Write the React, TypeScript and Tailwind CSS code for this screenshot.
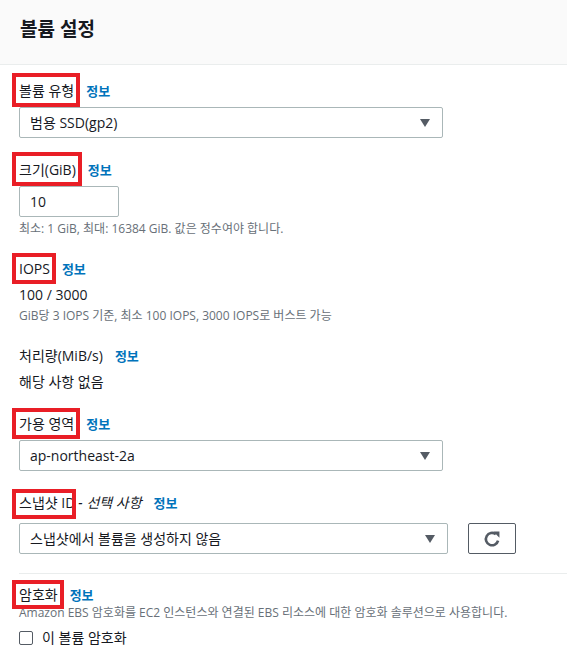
import React from "react";

const Info = () => (
  <a className="ml-[12px] text-[13px] font-semibold text-[#0073bb] cursor-pointer">정보</a>
);

type LabelProps = {
  text: string;
  mark?: boolean;
  box?: string;
  extra?: React.ReactNode;
};

const FieldLabel: React.FC<LabelProps> = ({ text, mark = true, box = "", extra }) => (
  <div className="flex items-center h-5 text-[14px] leading-5 text-[#16191f]">
    <span className="relative">
      {text}
      {mark && (
        <span className={`absolute border-4 border-[#e91e26] pointer-events-none ${box}`} />
      )}
    </span>
    {extra}
    <Info />
  </div>
);

const Caret = () => (
  <svg width="10" height="8" viewBox="0 0 10 8" className="shrink-0">
    <path d="M0 0h10L5 8z" fill="#545b64" />
  </svg>
);

const Select: React.FC<{ value: string; className?: string }> = ({ value, className = "" }) => (
  <div
    className={`flex items-center justify-between h-[31px] border border-[#aab7b8] rounded-[2px] pl-[10px] pr-[12px] text-[14px] text-[#16191f] bg-white ${className}`}
  >
    <span>{value}</span>
    <Caret />
  </div>
);

const RefreshIcon = () => (
  <svg width="18" height="18" viewBox="0 0 16 16" fill="none">
    <path
      d="M13.4 9.4A5.5 5.5 0 1 1 11.4 3.7"
      stroke="#545b64"
      strokeWidth="2.3"
    />
    <path d="M9.2 1.4h5.4v5.4z" fill="#545b64" />
  </svg>
);

export default function App() {
  return (
    <div
      className="w-[567px] h-[662px] bg-white overflow-hidden"
      style={{ fontFamily: '"Open Sans", "Noto Sans CJK KR", sans-serif' }}
    >
      <div className="h-[65px] bg-[#fafafa] border-b border-[#eaeded] flex items-center pl-[20px]">
        <h2 className="text-[19px] font-bold text-[#16191f] -mt-[5px]">볼륨 설정</h2>
      </div>

      <div className="pl-[19px] pt-[16px]">
        {/* 볼륨 유형 */}
        <FieldLabel text="볼륨 유형" box="-left-[7px] -right-[6px] -top-[8px] -bottom-[6px]" />
        <Select value="범용 SSD(gp2)" className="mt-[6px] w-[424px]" />

        {/* 크기 */}
        <div className="mt-[22px]">
          <FieldLabel text="크기(GiB)" box="-left-[7px] -right-[6px] -top-[8px] -bottom-[6px]" />
        </div>
        <div className="mt-[6px] w-[100px] h-[31px] border border-[#aab7b8] rounded-[2px] flex items-center pl-[10px] text-[14px] text-[#16191f]">
          10
        </div>
        <p className="mt-[4px] text-[12px] leading-4 text-[#687078]">
          최소: 1 GiB, 최대: 16384 GiB. 값은 정수여야 합니다.
        </p>

        {/* IOPS */}
        <div className="mt-[22px]">
          <FieldLabel text="IOPS" box="-left-[7px] -right-[6px] -top-[6px] -bottom-[5px]" />
        </div>
        <p className="mt-[6px] text-[14px] leading-5 text-[#16191f]">100 / 3000</p>
        <p className="mt-[3px] text-[12px] leading-4 text-[#687078]">
          GiB당 3 IOPS 기준, 최소 100 IOPS, 3000 IOPS로 버스트 가능
        </p>

        {/* 처리량 */}
        <div className="mt-[22px]">
          <FieldLabel text="처리량(MiB/s)" mark={false} />
        </div>
        <p className="mt-[6px] text-[14px] leading-5 text-[#16191f]">해당 사항 없음</p>

        {/* 가용 영역 */}
        <div className="mt-[22px]">
          <FieldLabel text="가용 영역" box="-left-[7px] -right-[6px] -top-[6px] -bottom-[5px]" />
        </div>
        <Select value="ap-northeast-2a" className="mt-[6px] w-[424px]" />

        {/* 스냅샷 ID */}
        <div className="mt-[22px]">
          <FieldLabel
            text="스냅샷 ID"
            box="-left-[7px] -right-[1px] -top-[4px] -bottom-[6px]"
            extra={<span className="ml-[3px] italic">- 선택 사항</span>}
          />
        </div>
        <div className="mt-[10px] flex items-center gap-[20px]">
          <Select value="스냅샷에서 볼륨을 생성하지 않음" className="w-[429px]" />
          <button className="w-[48px] h-[31px] border border-[#545b64] rounded-[2px] flex items-center justify-center bg-white">
            <RefreshIcon />
          </button>
        </div>

        <div className="mt-[19px] border-t border-[#eaeded]" />

        {/* 암호화 */}
        <div className="mt-[11px]">
          <FieldLabel text="암호화" box="-left-[7px] -right-[6px] -top-[5px] -bottom-[4px]" />
        </div>
        <p className="mt-[0px] text-[12px] leading-4 text-[#687078]">
          Amazon EBS 암호화를 EC2 인스턴스와 연결된 EBS 리소스에 대한 암호화 솔루션으로 사용합니다.
        </p>
        <label className="mt-[6px] flex items-center gap-[9px] text-[14px] text-[#16191f]">
          <span className="w-[14px] h-[14px] border border-[#545b64] rounded-[2px] bg-white" />
          이 볼륨 암호화
        </label>
      </div>
    </div>
  );
}
